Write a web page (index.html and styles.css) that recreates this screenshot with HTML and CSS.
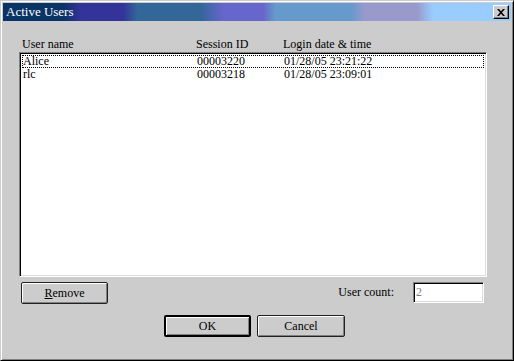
FILE: index.html
```html
<!DOCTYPE html>
<html lang="en">

<head>
    <meta charset="UTF-8">
    <title>Active Users</title>
    <link rel="stylesheet" href="styles.css">
</head>

<body>
    <div class="window">
        <div class="titlebar">
            <span class="title">Active Users</span>
            <button class="close" aria-label="Close">
                <svg width="8" height="7" viewBox="0 0 8 7">
                    <path d="M0 0h2l2 2.2L6 0h2L5 3.5 8 7H6L4 4.8 2 7H0l3-3.5z" fill="#000" />
                </svg>
            </button>
        </div>

        <div class="content">
            <div class="cols header">
                <span>User name</span>
                <span>Session ID</span>
                <span>Login date &amp; time</span>
            </div>

            <div class="list">
                <div class="cols row focus">
                    <span>Alice</span>
                    <span>00003220</span>
                    <span>01/28/05 23:21:22</span>
                </div>
                <div class="cols row">
                    <span>rlc</span>
                    <span>00003218</span>
                    <span>01/28/05 23:09:01</span>
                </div>
            </div>

            <div class="tools">
                <button class="btn remove"><u>R</u>emove</button>
                <label class="count">User count:</label>
                <input class="countbox" type="text" value="2" disabled>
            </div>

            <div class="actions">
                <button class="btn ok">OK</button>
                <button class="btn cancel">Cancel</button>
            </div>
        </div>
    </div>
</body>

</html>
```

FILE: styles.css
```css
* {
    box-sizing: border-box;
}

body {
    margin: 0;
    background-color: #cccccc;
    font-family: "Liberation Serif", "Times New Roman", serif;
    font-size: 12px;
    color: #000;
}

.window {
    width: 514px;
    height: 361px;
    padding: 2px;
    background-color: #cccccc;
    border: 1px solid;
    border-color: #cccccc #000 #000 #cccccc;
    box-shadow: inset 1px 1px #fff, inset -1px -1px #808080;
}

.titlebar {
    height: 18px;
    display: flex;
    align-items: center;
    justify-content: space-between;
    padding: 0 2px 0 3px;
    background: linear-gradient(to right,
            #0a3366 0px, #0a3366 60px,
            #333399 78px, #333399 120px,
            #336699 134px, #336699 198px,
            #6666cc 220px, #6666cc 260px,
            #6699cc 272px, #6699cc 348px,
            #9999cc 362px, #9999cc 414px,
            #99ccff 430px, #99ccff 100%);
}

.title {
    color: #fff;
    font-size: 13px;
    line-height: 18px;
}

.close {
    width: 16px;
    height: 14px;
    padding: 0;
    display: flex;
    align-items: center;
    justify-content: center;
    background-color: #cccccc;
    border: 1px solid;
    border-color: #fff #000 #000 #fff;
    box-shadow: inset -1px -1px #808080;
}

.content {
    padding: 0 24px 0 16px;
}

.cols {
    display: grid;
    grid-template-columns: 174px 87px 1fr;
    white-space: nowrap;
}

.header {
    margin-top: 16px;
    height: 15px;
    line-height: 14px;
    padding-left: 3px;
}

.list {
    height: 225px;
    background-color: #fff;
    border: 1px solid;
    border-color: #808080 #fff #fff #808080;
    box-shadow: inset 1px 1px #000, inset -1px -1px #dddddd;
    padding: 2px 2px 0 2px;
}

.row {
    height: 13px;
    line-height: 13px;
    padding-left: 1px;
}

.focus {
    outline: 1px dotted #000;
    outline-offset: -1px;
}

.tools {
    display: flex;
    align-items: center;
    margin-top: 4px;
    padding-left: 2px;
}

.btn {
    font-family: inherit;
    font-size: 12px;
    width: 87px;
    height: 22px;
    padding: 0;
    background-color: #cccccc;
    border: 1px solid #222;
    border-radius: 2px;
    box-shadow: inset 1px 1px #fff, inset -1px -1px #808080;
    color: #000;
}

.remove {
    margin-top: 1px;
}

.count {
    margin-left: auto;
    margin-right: 19px;
}

.countbox {
    width: 71px;
    height: 21px;
    padding: 0 0 0 2px;
    font-family: inherit;
    font-size: 12px;
    color: #808080;
    background-color: #fff;
    border: 1px solid;
    border-color: #808080 #fff #fff #808080;
    box-shadow: inset 1px 1px #000, inset -1px -1px #dddddd;
    margin-right: 3px;
}

.actions {
    display: flex;
    justify-content: center;
    gap: 6px;
    margin-top: 11px;
    padding-left: 3px;
}

.ok {
    border: 2px solid #000;
}

.cancel {
    width: 88px;
}
```
